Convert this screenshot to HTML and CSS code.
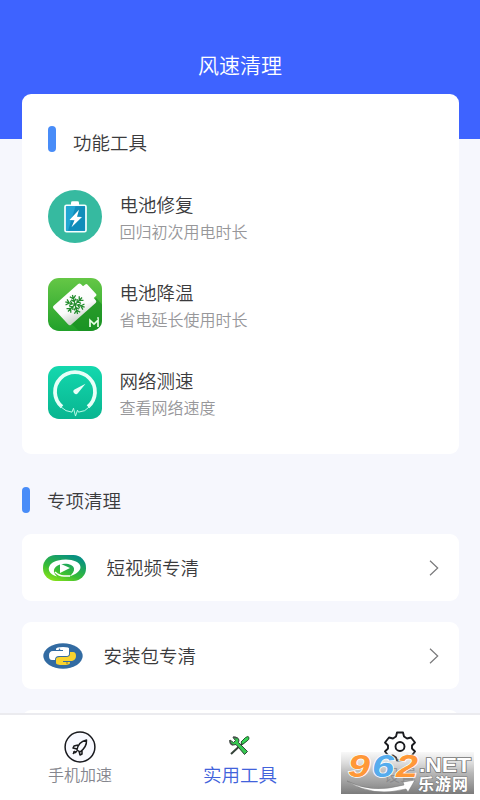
FILE: index.html
```html
<!DOCTYPE html>
<html lang="zh-CN">
<head>
<meta charset="utf-8">
<title>风速清理</title>
<link rel="stylesheet" href="styles.css">
</head>
<body>
<div class="app">
  <main class="content">
    <header class="header"><h1>风速清理</h1></header>
    <section class="card">
      <h2 class="heading"><i class="bar"></i><span>功能工具</span></h2>
      <div class="tool">
        <svg class="tool-icon" viewBox="0 0 54 54" preserveAspectRatio="none">
          <circle cx="27" cy="27" r="27" fill="#36baa0"/>
          <rect x="23" y="11.500" width="8" height="6" rx="1.500" fill="#fff"/>
          <rect x="17" y="15.500" width="21" height="27" rx="1.500" fill="#22a6d2" stroke="#f5ffff" stroke-width="1.700"/>
          <path d="M27.500 16.500H37v25H20z" fill="#087fae" opacity=".65"/>
          <path d="M31 20L21.500 30.500l5 .3L23.500 38 34 27.500l-5-.3z" fill="#fff"/>
        </svg>
        <div><h3>电池修复</h3><p>回归初次用电时长</p></div>
      </div>
      <div class="tool">
        <svg class="tool-icon" viewBox="0 0 54 54" preserveAspectRatio="none">
          <defs>
            <linearGradient id="green" x2="0" y2="1"><stop stop-color="#65c746"/><stop offset="1" stop-color="#21a12a"/></linearGradient>
            <linearGradient id="silver" x1=".5" x2="0" y2="1"><stop stop-color="#fff"/><stop offset=".55" stop-color="#fbfbfb"/><stop offset="1" stop-color="#c7cfc7"/></linearGradient>
            <clipPath id="tile"><rect width="54" height="54" rx="11"/></clipPath>
          </defs>
          <rect width="54" height="54" rx="11" fill="url(#green)"/>
          <path clip-path="url(#tile)" d="M48 20L54 27V54H31L24 47z" fill="#168b20" opacity=".6"/>
          <g transform="translate(27 26.500) rotate(-42)" fill="url(#silver)">
            <path d="M-17-13H16q2 0 2 2v3h3q1.500 0 1.500 1.500v13q0 1.500-1.500 1.500h-3v3q0 2-2 2h-33q-2 0-2-2v-22q0-2 2-2z"/>
          </g>
          <g transform="translate(27 27) rotate(-15)" fill="none" stroke="#238c2d" stroke-width="1.300">
            <path id="arm" d="M0 0v-10M-3-9L0-6 3-9M-2.500-5.500L0-3 2.500-5.500"/>
            <use href="#arm" transform="rotate(60)"/><use href="#arm" transform="rotate(120)"/><use href="#arm" transform="rotate(180)"/><use href="#arm" transform="rotate(240)"/><use href="#arm" transform="rotate(300)"/>
          </g>
          <path d="M42 50v-7l4 4 4-4v7M50 40v1.500" fill="none" stroke="#e9ffe8" stroke-width="1.700"/>
        </svg>
        <div><h3>电池降温</h3><p>省电延长使用时长</p></div>
      </div>
      <div class="tool">
        <svg class="tool-icon" viewBox="0 0 54 54" preserveAspectRatio="none">
          <defs><linearGradient id="mint" x2="0" y2="1"><stop stop-color="#14d8ae"/><stop offset="1" stop-color="#08b590"/></linearGradient></defs>
          <rect width="54" height="54" rx="11" fill="url(#mint)"/>
          <path d="M14 41.500A20 20 0 1 1 40 41.500" fill="none" stroke="#e7fff8" stroke-width="3.800"/>
          <path d="M12 41Q18 47 24 47l1.500-4 2 8 2-6 1 2Q37 47 42 41" fill="none" stroke="#bafbe9" stroke-width="1"/>
          <path d="M37.500 18L30 27.500a2.500 2.500 0 1 1-3.500-3.500z" fill="#e7fff8"/>
        </svg>
        <div><h3>网络测速</h3><p>查看网络速度</p></div>
      </div>
    </section>
    <h2 class="heading heading-outer"><i class="bar"></i><span>专项清理</span></h2>
    <div class="row">
      <svg class="row-icon video" viewBox="0 0 43 26">
        <defs><linearGradient id="lime" x1="0" y1="1" x2=".65" y2="0"><stop stop-color="#a0ee12"/><stop offset=".45" stop-color="#38bd35"/><stop offset="1" stop-color="#079081"/></linearGradient></defs>
        <rect width="43" height="26" rx="12.500" fill="url(#lime)"/>
        <path d="M14 21.500C2 18 4 8 15 5.500 26 3 37 6 37.500 12c0 4-4 7-11 9.500 3-3 5-5 4.500-8-.5-4-8-6-14-4C10 12 9 17 14 21.500z" fill="#fff"/>
        <path d="M12 17q4 4 9 4h6" fill="none" stroke="#fff" stroke-width="1.500"/>
        <path d="M17 8.500l10 4.500-10 5z" fill="#fff"/>
      </svg>
      <span>短视频专清</span>
      <svg class="chevron" viewBox="0 0 10 16"><path d="M1 .8L8.700 8 1 15.200"/></svg>
    </div>
    <div class="row">
      <svg class="row-icon python" viewBox="0 0 40 26">
        <ellipse cx="20" cy="13" rx="19.700" ry="12.700" fill="#326ba2"/>
        <path d="M13 7V6q0-2 7-2t6 2v5q0 2-3 2h-7q-4 0-4 4H9q-3 0-3-4.500T10 8h10V7z" fill="#fff"/>
        <path d="M27 9h3q3 0 3 4t-4 5h-9v1h7v1q0 2-7 2t-7-2v-4q0-2 4-2h6q4 0 4-3z" fill="#f9d32e"/>
        <circle cx="16.500" cy="6.200" r=".8" fill="#326ba2"/><circle cx="24" cy="20" r=".8" fill="#826f33"/>
      </svg>
      <span>安装包专清</span>
      <svg class="chevron" viewBox="0 0 10 16"><path d="M1 .8L8.700 8 1 15.200"/></svg>
    </div>
    <div class="row"></div>
  </main>
  <nav class="tabs">
    <div class="tab">
      <svg class="tab-icon" viewBox="0 0 34 34" fill="none" stroke="#18191d">
        <circle cx="17" cy="17" r="14.900" fill="#f8f9ff" stroke-width="1.500"/>
        <path d="M14 20q1-8 9.500-10Q24 17 17 22zM15 15l-4 1-1 2 4 1M19 20v4l-2 1-1-4" stroke-width="1.500" stroke-linejoin="round"/>
        <path d="M10 24l1-3 2 1z" fill="#18191d"/><path d="M14 21l-2 2" stroke-width="1.500"/>
      </svg>
      <span>手机加速</span>
    </div>
    <div class="tab active">
      <svg class="tab-icon" viewBox="0 0 34 34">
        <path d="M8 24L22 11" stroke="#344238" stroke-width="2"/>
        <path d="M18 12L22.500 7.500q3-2 3.500 0t-2 3.500l-4.500 3.500z" fill="#35d455" stroke="#26552f"/>
        <path d="M10 7.500l2.500 3-2 2L7 10q-.5 4 3 5l3-.5 8.500 10 3-3-9-9 .5-2.500q-1-3-4-3z" fill="#35c74f" stroke="#304338"/>
        <path d="M7 10q-.5 4 3 5M10 7l4 1" fill="none" stroke="#4a504d" stroke-width="1.500"/>
      </svg>
      <span>实用工具</span>
    </div>
    <div class="tab">
      <svg class="tab-icon" viewBox="0 0 34 34" fill="none" stroke="#191a1e" stroke-width="1.900" stroke-linejoin="round">
        <path d="M14 2.500h6l1 4 3 2 4-1 4 5-3 3v3l3 3-4 5-4-1-3 2-1 3h-6l-1-3-3-2-4 1-4-5 3-3v-3l-3-3 4-5 4 1 3-2z"/>
        <circle cx="17" cy="16.500" r="4.500"/>
      </svg>
      <span>设置</span>
    </div>
  </nav>
  <svg class="watermark" viewBox="0 0 133 42">
    <defs><linearGradient id="shade" x2="0" y2="1"><stop stop-color="#bbb" stop-opacity=".1"/><stop offset=".5" stop-color="#999" stop-opacity=".7"/><stop offset="1" stop-color="#747474" stop-opacity=".95"/></linearGradient></defs>
    <rect width="133" height="42" fill="url(#shade)"/>
    <path d="M6 29Q30 42 63 33l-1-3 12-2-7 12-2-3Q32 46 6 29z" fill="#fff" stroke="#777" stroke-width=".5"/>
    <g class="mark-number"><text x="7" y="25" textLength="22" lengthAdjust="spacingAndGlyphs" fill="#ff9838">9</text><text x="31" y="25" textLength="22" lengthAdjust="spacingAndGlyphs" fill="#55aced">6</text><text x="55" y="25" textLength="22" lengthAdjust="spacingAndGlyphs" fill="#ff9838">2</text></g>
    <text class="mark-net" x="78" y="20" textLength="52" lengthAdjust="spacingAndGlyphs">.NET</text>
    <text class="mark-cn" x="77" y="37.500" textLength="50">乐游网</text>
  </svg>
</div>
</body>
</html>
```
FILE: styles.css
```css
* { box-sizing: border-box; }
body { margin: 0; background: #fff; font-family: "Noto Sans CJK SC", sans-serif; font-weight: 350; color: #3b3b3d; }
h1, h2, h3, p { margin: 0; font-weight: inherit; }
.app { position: relative; display: flex; flex-direction: column; height: 800px; overflow: hidden; }
.content { height: 713px; overflow: hidden; padding: 0 21.500px; background: linear-gradient(#3e63ff 139px, #f6f7fd 139px); }
.header { height: 94px; padding-top: 49px; }
h1 { color: #fff; font-size: 21px; line-height: 30px; text-align: center; }
.card { height: 360px; padding: 32px 26px 0; background: #fff; border-radius: 9px; }
.heading { display: flex; align-items: flex-start; height: 26px; gap: 17.500px; font-size: 18.500px; line-height: 26px; }
.bar { width: 8px; height: 26px; border-radius: 4px; background: #488cf8; }
.card .heading { margin-bottom: 38px; }
.card .heading span { padding-top: 3px; }
.tool { display: flex; height: 88px; gap: 18px; }
.tool-icon { width: 54px; height: 53px; }
h3 { font-size: 18.500px; line-height: 28px; }
.tool p { font-size: 16px; line-height: 26px; color: #97979a; }
.heading-outer { margin: 33px 0 21px; }
.row { display: flex; align-items: center; height: 67px; margin-bottom: 21px; padding: 0 20px 0 21px; border-radius: 9px; background: #fff; font-size: 18.500px; }
.row > span { margin-top: -2px; }
.row-icon { margin-right: 21px; flex-shrink: 0; }
.video { width: 43px; height: 26px; }
.python { width: 40px; height: 26px; }
.chevron { width: 10px; height: 16px; margin-left: auto; fill: none; stroke: #79797b; stroke-width: 1.200; }
.tabs { display: grid; grid-template-columns: repeat(3, 1fr); height: 87px; border-top: 2px solid #ebebef; background: #fff; }
.tab { display: flex; flex-direction: column; align-items: center; padding-top: 15px; color: #85868e; font-size: 16px; line-height: 24px; }
.tab-icon { width: 34px; height: 34px; flex-shrink: 0; }
.tab span { margin-top: -2px; }
.active { color: #4162db; font-size: 18.500px; }
.watermark { position: absolute; left: 341px; top: 752px; width: 133px; height: 42px; overflow: visible; }
.mark-number { font: italic 700 31px "Liberation Sans", sans-serif; stroke: #fff; stroke-width: 1.500px; paint-order: stroke; }
.mark-net { font: 700 20px "Liberation Sans", sans-serif; fill: #fff; stroke: #737373; stroke-width: 1.500px; paint-order: stroke; }
.mark-cn { font: 700 16px "Noto Sans CJK SC", sans-serif; fill: #fff; stroke: #777; stroke-width: 1px; paint-order: stroke; }
```
